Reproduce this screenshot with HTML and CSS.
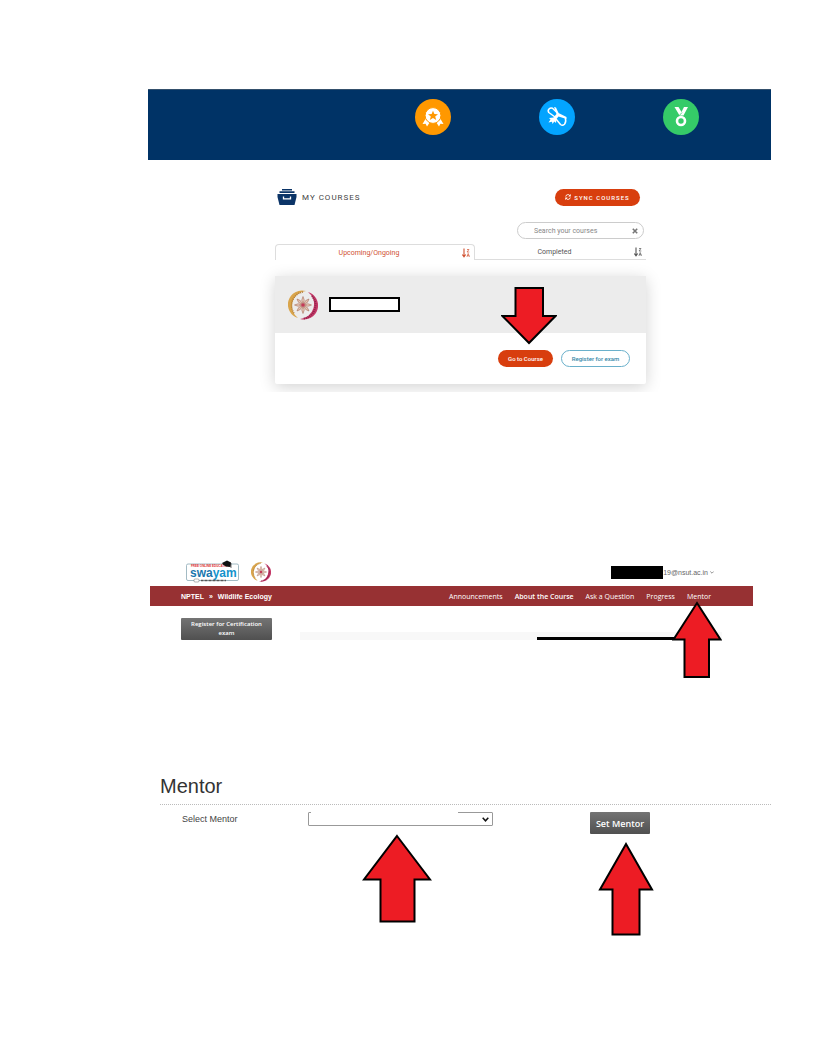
FILE: index.html
```html
<!DOCTYPE html>
<html lang="en">
<head>
<meta charset="utf-8">
<title>My Courses</title>
<link rel="stylesheet" href="styles.css">
</head>
<body>
<svg class="defs" aria-hidden="true">
  <symbol id="emblem" viewBox="0 0 30 30">
    <path d="M18 1A14 14 0 0 0 10 28A15 15 0 0 1 18 1Z" fill="#d9a54c"/>
    <path d="M15 2A13.500 13.500 0 0 0 6 23" fill="none" stroke="#b07a35" stroke-width="1.500" stroke-dasharray="1 1"/>
    <path d="M20 2A14 14 0 0 1 12 29A15 15 0 0 0 20 2Z" fill="#c43a68"/>
    <path d="M24 6A13.500 13.500 0 0 1 15 28.500" fill="none" stroke="#8f1f48" stroke-width="2" stroke-dasharray="1 1"/>
    <g fill="#e6c9b8" stroke="#a8705f" stroke-width=".6">
      <path id="petal" d="M15 14Q12.500 10 15 6.500Q17.500 10 15 14Z"/>
      <use href="#petal" transform="rotate(45 15 15)"/>
      <use href="#petal" transform="rotate(90 15 15)"/>
      <use href="#petal" transform="rotate(135 15 15)"/>
      <use href="#petal" transform="rotate(180 15 15)"/>
      <use href="#petal" transform="rotate(225 15 15)"/>
      <use href="#petal" transform="rotate(270 15 15)"/>
      <use href="#petal" transform="rotate(315 15 15)"/>
    </g>
    <circle cx="15" cy="15" r="1.800" fill="#c43a58"/>
  </symbol>
  <symbol id="sort" viewBox="0 0 8 10">
    <path d="M2 .5V8M.3 6.500L2 8.800L3.700 6.500" fill="none" stroke="currentColor" stroke-width="1.100"/>
    <path d="M5 1.500H7L5 4H7.300M4.900 8.800L6.200 5.500L7.500 8.800M5.200 7.800H7.200" fill="none" stroke="currentColor" stroke-width=".7"/>
  </symbol>
</svg>
<main class="page">
  <header class="banner">
    <span class="badge badge-orange">
      <svg width="22" height="22" viewBox="0 0 22 22" role="img" aria-label="Rosette">
        <path d="M3.500 13L.5 18L3.600 17.800L5 20.500L8 16ZM18.500 13L21.500 18L18.400 17.800L17 20.500L14 16Z" fill="#fff"/>
        <circle cx="11" cy="9.500" r="7.900" fill="#fff" stroke="#ff9800" stroke-width="1"/>
        <path d="M11 4.800L12.400 8L16 8.300L13.200 10.500L14.200 14L11 12L7.800 14L8.800 10.500L6 8.300L9.600 8Z" fill="#ff9800"/>
      </svg>
    </span>
    <span class="badge badge-blue">
      <svg width="22" height="22" viewBox="0 0 22 22" role="img" aria-label="Diploma">
        <g fill="none" stroke="#fff" stroke-width="1.500" stroke-linejoin="round">
          <path d="M9 11L2.800 6.500Q1.500 4.500 3 3Q4.500 1.500 6.500 2.200L12 7.500"/>
          <path d="M10 13L14.500 18.500Q16.500 20 18.500 18.200Q20.500 16 19.300 12"/>
        </g>
        <path d="M8 1L10 1.500L12.500 7L20.500 11V13L12.500 10.500L10.500 13L10 17L8.300 15.500L6.500 18L6 15.800L2.500 16.500L4.500 13.500L3 12L7.500 11.500L10.500 8Z" fill="#fff"/>
      </svg>
    </span>
    <span class="badge badge-green">
      <svg width="22" height="22" viewBox="0 0 22 22" role="img" aria-label="Medal">
        <path d="M4.500 1H8.500L11.500 6L14 1H18L13.500 9.500H9.500Z" fill="#fff"/>
        <path d="M9.300 9.500L12 6.500" stroke="#35cb68" stroke-width=".8"/>
        <circle cx="11" cy="15" r="4" fill="none" stroke="#fff" stroke-width="2.600"/>
      </svg>
    </span>
  </header>

  <section class="courses">
    <div class="courses-head">
      <h2 class="courses-title">
        <svg width="20" height="16" viewBox="0 0 20 16" aria-hidden="true">
          <path d="M5 0H15V1.500H5ZM2.500 2.300H17.500V4H2.500ZM.5 5H19.500V8L17.500 16H2.500L.5 8Z" fill="#0b3467"/>
          <path d="M6.500 7.500V9.800H13.500V7.500" fill="none" stroke="#fff" stroke-width="1.300"/>
        </svg>
        MY COURSES
      </h2>
      <button class="pill sync" type="button">
        <svg width="6" height="6" viewBox="0 0 12 12" aria-hidden="true">
          <path d="M1.500 5A4.500 4.500 0 0 1 9.500 3M10.500 7A4.500 4.500 0 0 1 2.500 9" fill="none" stroke="#fff" stroke-width="2"/>
          <path d="M11.500 0V5H6.500ZM.5 12V7H5.500Z" fill="#fff"/>
        </svg>
        SYNC COURSES
      </button>
    </div>
    <form class="search">
      <input type="text" placeholder="Search your courses" aria-label="Search your courses">
      <button type="button" aria-label="Clear search">
        <svg width="6" height="6" viewBox="0 0 6 6"><path d="M.8 .8L5.200 5.200M5.200 .8L.8 5.200" stroke="#777" stroke-width="1.600"/></svg>
      </button>
    </form>
    <div class="tabs">
      <div class="tab tab-active">
        <button type="button">Upcoming/Ongoing</button>
        <svg width="8" height="10" aria-hidden="true"><use href="#sort"/></svg>
      </div>
      <div class="tab">
        <button type="button">Completed</button>
        <svg width="8" height="10" aria-hidden="true"><use href="#sort"/></svg>
      </div>
    </div>
    <article class="card">
      <div class="card-head">
        <svg width="30" height="30" role="img" aria-label="NPTEL"><use href="#emblem"/></svg>
        <span class="blank-name"></span>
      </div>
      <div class="card-actions">
        <button class="pill go" type="button">Go to Course</button>
        <button class="pill register" type="button">Register for exam</button>
        <svg class="arrow arrow-down" width="56" height="58" viewBox="0 0 56 58" aria-hidden="true">
          <path d="M14.500 1H42V29H54.500L28 56L1.500 29H14.500Z"/>
        </svg>
      </div>
    </article>
  </section>

  <section class="portal">
    <div class="portal-top">
      <svg width="54" height="24" viewBox="0 0 54 24" role="img" aria-label="swayam">
        <rect x=".5" y="4" width="52" height="16.500" rx="1.500" fill="#fff" stroke="#8baab5" stroke-width=".8"/>
        <text x="5" y="7" class="logo-small">FREE ONLINE EDUCATION</text>
        <text x="4" y="17" class="logo-word">swa<tspan fill="#1493cc">yam</tspan></text>
        <path d="M36 3L41 .5L45 2.500L44.500 7L40 6.500L37.500 5Z" fill="#111"/>
        <path d="M45 3V8" stroke="#111" stroke-width=".6"/>
        <rect x="8" y="19" width="5" height="3" rx="1" fill="#fff" stroke="#666" stroke-width=".5"/>
        <path d="M15 20.500H40" stroke="#555" stroke-width="1.300" stroke-dasharray="2 .5 1 .5"/>
      </svg>
      <svg width="20" height="20" role="img" aria-label="NPTEL"><use href="#emblem"/></svg>
      <div class="account">
        <span class="redacted"></span>
        <button type="button">19@nsut.ac.in
          <svg width="4" height="3" viewBox="0 0 4 3" aria-hidden="true"><path d="M.3 .5L2 2.200L3.700 .5" fill="none" stroke="#666" stroke-width=".7"/></svg>
        </button>
      </div>
    </div>
    <nav class="navbar">
      <div class="crumbs"><a href="#">NPTEL</a><span>»</span><a href="#">Wildlife Ecology</a></div>
      <div class="links">
        <a href="#">Announcements</a>
        <a href="#" class="current">About the Course</a>
        <a href="#">Ask a Question</a>
        <a href="#">Progress</a>
        <a href="#">Mentor</a>
      </div>
      <svg class="arrow arrow-nav" width="50" height="78" viewBox="0 0 50 78" aria-hidden="true">
        <path d="M25 2L48.500 38.500H37V76H12.500V38.500H1.500Z"/>
      </svg>
    </nav>
    <div class="portal-body">
      <button class="dark certify" type="button">Register for Certification exam</button>
      <div class="strip"><span></span></div>
    </div>
  </section>

  <section class="mentor">
    <h1>Mentor</h1>
    <form class="mentor-form">
      <label for="mentor">Select Mentor</label>
      <div class="field">
        <div class="select-wrap">
          <select id="mentor"><option></option></select>
          <svg width="7" height="5" viewBox="0 0 7 5" aria-hidden="true"><path d="M.7 .8L3.500 3.800L6.300 .8" fill="none" stroke="#111" stroke-width="1.500"/></svg>
          <span class="blank-top"></span>
        </div>
        <svg class="arrow" width="70" height="90" viewBox="0 0 70 90" aria-hidden="true">
          <path d="M35 2L68 45.500H52.500V87.500H18.500V45.500H2Z"/>
        </svg>
      </div>
      <div class="action">
        <button class="dark set" type="button">Set Mentor</button>
        <svg class="arrow" width="56" height="96" viewBox="0 0 56 96" aria-hidden="true">
          <path d="M28 3L54 48.500H41.500V93.500H14.500V48.500H2Z"/>
        </svg>
      </div>
    </form>
  </section>
</main>
</body>
</html>
```
FILE: styles.css
```css
* { box-sizing: border-box; }

body {
  margin: 0;
  background: #fff;
  font-family: Roboto, sans-serif;
}

button {
  border: 0;
  padding: 0;
  background: none;
  color: inherit;
  font: inherit;
}

a { color: inherit; text-decoration: none; }
svg { flex: none; }
.defs { display: none; }

.page { padding: 89px 45px 112px 148px; }

.arrow path {
  fill: #ed1c24;
  stroke: #000;
  stroke-width: 2px;
}

.banner {
  display: grid;
  grid-template-columns: repeat(3, 124px);
  justify-content: end;
  justify-items: center;
  padding: 9px 28px 25px;
  background: #003366;
  border-top: 1px solid #34506c;
}

.badge {
  display: flex;
  align-items: center;
  justify-content: center;
  width: 36px;
  height: 36px;
  border-radius: 50%;
}
.badge-orange { background: #ff9800; }
.badge-blue { background: #03a4ff; }
.badge-green { background: #35cb68; }

.courses {
  height: 232px;
  margin-right: 100px;
  padding: 27px 25px 0 127px;
  overflow: hidden;
  font-size: 7px;
}

.courses-head {
  display: flex;
  align-items: center;
  justify-content: space-between;
  height: 20px;
  padding: 0 6px 0 2px;
}
.courses-title {
  display: flex;
  align-items: center;
  gap: 5px;
  margin: 0;
  color: #444;
  font-size: 8px;
  font-weight: 400;
  letter-spacing: 1px;
}

.pill {
  height: 17px;
  border-radius: 9px;
  background: #d83e0e;
  color: #fff;
  font-size: 6px;
  font-weight: 500;
}
.sync {
  display: flex;
  align-items: center;
  justify-content: center;
  gap: 3px;
  width: 85px;
  letter-spacing: 1px;
}

.search {
  display: flex;
  align-items: center;
  width: 127px;
  height: 17px;
  margin: 15px 2px 0 auto;
  padding: 0 5px 0 16px;
  border: 1px solid #ccc;
  border-radius: 9px;
}
.search input {
  flex: 1;
  min-width: 0;
  padding: 0;
  border: 0;
  outline: 0;
  background: none;
  font: inherit;
}
.search input::placeholder { color: #888; }
.search button { display: flex; }

.tabs {
  display: grid;
  grid-template-columns: 200px 1fr;
  margin-top: 5px;
}
.tab {
  display: flex;
  align-items: center;
  height: 16px;
  padding: 0 4px 0 0;
  border-bottom: 1px solid #ddd;
  color: #555;
}
.tab button { flex: 1; }
.tab-active {
  border: 1px solid #ddd;
  border-bottom: 0;
  border-radius: 4px 4px 0 0;
  color: #d05030;
}

.card {
  margin-top: 16px;
  border-radius: 2px;
  background: #fff;
  box-shadow: 0 3px 16px rgba(0, 0, 0, 0.18);
}
.card-head {
  display: flex;
  align-items: center;
  gap: 11px;
  height: 57px;
  padding-left: 13px;
  background: #ececec;
}
.blank-name {
  width: 71px;
  height: 15px;
  border: 2px solid #000;
  background: #fff;
}
.card-actions {
  position: relative;
  display: flex;
  justify-content: flex-end;
  gap: 8px;
  padding: 17px 16px;
}
.go { width: 55px; }
.register {
  width: 69px;
  border: 1px solid #6ab0cb;
  background: #fff;
  color: #3287a8;
}
.arrow-down {
  position: absolute;
  right: 89px;
  bottom: 39px;
}

.portal {
  margin: 168px 18px 0 2px;
  font-size: 7px;
}
.portal-top {
  display: flex;
  align-items: center;
  gap: 11px;
  height: 26px;
  padding: 0 39px 2px 36px;
}
.logo-word {
  font: bold 12px "Liberation Sans", Arial, sans-serif;
  fill: #1976ad;
}
.logo-small {
  font: bold 3px "Liberation Sans", Arial, sans-serif;
  fill: #e03030;
}
.account {
  display: flex;
  align-items: center;
  margin-left: auto;
  color: #666;
  font-family: "Liberation Sans", Arial, sans-serif;
}
.account button { display: flex; align-items: center; gap: 2px; }
.redacted { width: 52px; height: 13px; background: #000; }

.navbar {
  position: relative;
  display: flex;
  align-items: center;
  justify-content: space-between;
  height: 20px;
  padding: 0 42px 0 31px;
  background: #973133;
  color: #fff;
}
.crumbs {
  display: flex;
  gap: 5px;
  font-family: "Liberation Sans", Arial, sans-serif;
  font-weight: 700;
}
.links {
  display: flex;
  gap: 12px;
  font-family: "Open Sans", sans-serif;
}
.current { font-weight: 600; }
.arrow-nav {
  position: absolute;
  z-index: 1;
  top: 15px;
  right: 31px;
}

.portal-body {
  display: flex;
  align-items: flex-end;
  gap: 28px;
  padding: 12px 31px 0;
}
.dark {
  border-radius: 1px;
  background: linear-gradient(#747474, #505050);
  color: #fff;
  font-family: "Open Sans", sans-serif;
  font-weight: 600;
}
.certify {
  width: 91px;
  height: 22px;
  padding: 0 8px;
  font-size: 6px;
  line-height: 9px;
}
.strip {
  display: flex;
  flex: 1;
  align-items: flex-end;
  justify-content: flex-end;
  height: 8px;
  padding-right: 35px;
  background: #f8f8f8;
}
.strip span { width: 150px; height: 3px; background: #000; }

.mentor {
  margin: 133px 0 0 12px;
  color: #444;
  font-family: "Liberation Sans", Arial, sans-serif;
}
.mentor h1 {
  margin: 0;
  padding-bottom: 5px;
  border-bottom: 1px dotted #bbb;
  color: #333;
  font-size: 20px;
  font-weight: 400;
  line-height: 26px;
}
.mentor-form {
  display: grid;
  grid-template-columns: 126px 185px 60px;
  padding: 7px 0 0 22px;
  font-size: 9px;
}
.mentor-form label { line-height: 14px; }
.field { display: grid; justify-items: center; align-content: start; gap: 8px; }
.field .arrow { margin-right: 8px; }
.select-wrap {
  position: relative;
  display: grid;
  align-items: center;
  width: 100%;
}
.select-wrap select,
.select-wrap svg { grid-area: 1 / 1; }
.select-wrap select {
  appearance: none;
  width: 100%;
  height: 14px;
  border: 1px solid #999;
  border-radius: 1px;
  background: #fff;
  font: inherit;
}
.select-wrap svg { justify-self: end; margin-right: 4px; pointer-events: none; }
.blank-top {
  position: absolute;
  top: 0;
  right: 35px;
  left: 3px;
  height: 1px;
  background: #fff;
}
.action {
  display: grid;
  justify-items: center;
  gap: 7px;
  margin: 0 -97px 0 97px;
}
.action .arrow { margin-right: -12px; }
.set { width: 60px; height: 22px; font-size: 9px; }
```
